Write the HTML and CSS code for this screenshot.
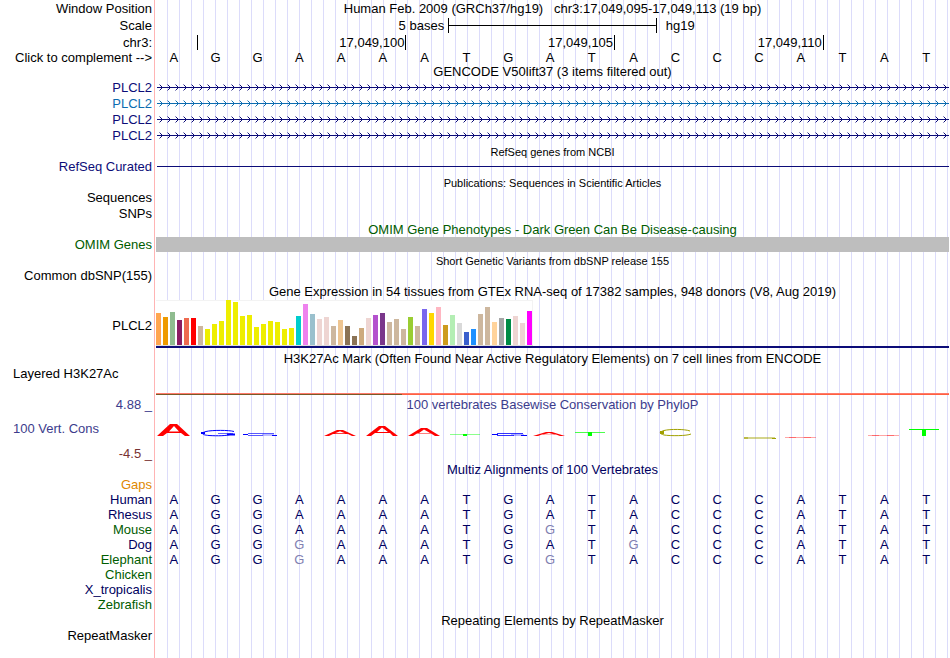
FILE: index.html
```html
<!DOCTYPE html>
<html lang="en">
<head>
<meta charset="utf-8">
<title>Genome Browser chr3:17,049,095-17,049,113</title>
<link rel="stylesheet" href="styles.css">
</head>
<body>
<svg class="defs" width="0" height="0" aria-hidden="true">
  <defs>
    <pattern id="chev-navy" x="2" width="8" height="8" patternUnits="userSpaceOnUse">
      <path d="M0 1h1v1h-1zM0 7h1v1h-1z" fill="#0c0c78" opacity=".45"/>
      <path d="M1 2h1v1h-1zM2 3h1v1h-1zM2 5h1v1h-1zM1 6h1v1h-1z" fill="#0c0c78"/>
      <path d="M0 4h8v1h-8z" fill="#0c0c78"/>
    </pattern>
    <pattern id="chev-blue" x="2" width="8" height="8" patternUnits="userSpaceOnUse">
      <path d="M0 1h1v1h-1zM0 7h1v1h-1z" fill="#0c6cb0" opacity=".45"/>
      <path d="M1 2h1v1h-1zM2 3h1v1h-1zM2 5h1v1h-1zM1 6h1v1h-1z" fill="#0c6cb0"/>
      <path d="M0 4h8v1h-8z" fill="#0c6cb0"/>
    </pattern>
  </defs>
</svg>
<main class="browser">
  <div class="row h17"><span class="label">Window Position</span><h1 class="title">Human Feb. 2009 (GRCh37/hg19) &nbsp; chr3:17,049,095-17,049,113 (19 bp)</h1></div>
  <div class="row h17"><span class="label">Scale</span>
    <div class="ruler"><span class="scale-from">5 bases</span><span class="scale-bar"></span><span class="scale-to">hg19</span></div>
  </div>
  <div class="row h16"><span class="label">chr3:</span>
    <div class="ruler"><span class="tick first"></span><span class="tick">17,049,100</span><span class="tick">17,049,105</span><span class="tick">17,049,110</span></div>
  </div>
  <div class="row h14"><span class="label">Click to complement --&gt;</span>
    <div class="bases"><span>A</span><span>G</span><span>G</span><span>A</span><span>A</span><span>A</span><span>A</span><span>T</span><span>G</span><span>A</span><span>T</span><span>A</span><span>C</span><span>C</span><span>C</span><span>A</span><span>T</span><span>A</span><span>T</span></div>
  </div>

  <div class="row h15"><span></span><h2 class="title">GENCODE V50lift37 (3 items filtered out)</h2></div>
  <div class="row h16 navy"><span class="label">PLCL2</span><div class="track"><svg class="gene" height="8"><rect width="100%" height="8" fill="url(#chev-navy)"/></svg></div></div>
  <div class="row h16 blue"><span class="label">PLCL2</span><div class="track"><svg class="gene" height="8"><rect width="100%" height="8" fill="url(#chev-blue)"/></svg></div></div>
  <div class="row h16 navy"><span class="label">PLCL2</span><div class="track"><svg class="gene" height="8"><rect width="100%" height="8" fill="url(#chev-navy)"/></svg></div></div>
  <div class="row h16 navy"><span class="label">PLCL2</span><div class="track"><svg class="gene" height="8"><rect width="100%" height="8" fill="url(#chev-navy)"/></svg></div></div>

  <div class="row h16"><span></span><h2 class="title small">RefSeq genes from NCBI</h2></div>
  <div class="row h15 navy"><span class="label">RefSeq Curated</span><div class="track"><div class="refseq"></div></div></div>

  <div class="row h16"><span></span><h2 class="title small">Publications: Sequences in Scientific Articles</h2></div>
  <div class="row h15"><span class="label">Sequences</span></div>
  <div class="row h16"><span class="label">SNPs</span></div>

  <div class="row h16 green"><span></span><h2 class="title">OMIM Gene Phenotypes - Dark Green Can Be Disease-causing</h2></div>
  <div class="row h15 green"><span class="label">OMIM Genes</span><div class="track"><div class="omim"></div></div></div>

  <div class="row h16"><span></span><h2 class="title small">Short Genetic Variants from dbSNP release 155</h2></div>
  <div class="row h15"><span class="label">Common dbSNP(155)</span></div>

  <div class="row h17"><span></span><h2 class="title">Gene Expression in 54 tissues from GTEx RNA-seq of 17382 samples, 948 donors (V8, Aug 2019)</h2></div>
  <div class="row h50"><span class="label">PLCL2</span>
    <div class="expression">
      <div class="bars">
        <i style="height:32px;background:#ffa54f"></i><i style="height:28px;background:#ee9a00"></i><i style="height:33px;background:#8fbc8f"></i><i style="height:25px;background:#8b1c62"></i><i style="height:27px;background:#ee6a50"></i><i style="height:27px;background:#ff0000"></i><i style="height:19px;background:#cdb79e"></i>
        <i style="height:16px;background:#eeee00"></i><i style="height:21px;background:#eeee00"></i><i style="height:24px;background:#eeee00"></i><i style="height:45px;background:#eeee00"></i><i style="height:43px;background:#eeee00"></i><i style="height:29px;background:#eeee00"></i><i style="height:30px;background:#eeee00"></i><i style="height:18px;background:#eeee00"></i><i style="height:21px;background:#eeee00"></i><i style="height:24px;background:#eeee00"></i><i style="height:23px;background:#eeee00"></i><i style="height:16px;background:#eeee00"></i><i style="height:17px;background:#eeee00"></i>
        <i style="height:29px;background:#00cdcd"></i><i style="height:41px;background:#ee82ee"></i><i style="height:31px;background:#9ac0cd"></i><i style="height:26px;background:#eed5d2"></i><i style="height:28px;background:#eed5d2"></i><i style="height:19px;background:#cdb79e"></i><i style="height:25px;background:#eec591"></i><i style="height:19px;background:#8b7355"></i><i style="height:9px;background:#8b7355"></i><i style="height:17px;background:#cdaa7d"></i><i style="height:27px;background:#eed5d2"></i><i style="height:30px;background:#b452cd"></i><i style="height:32px;background:#7a378b"></i>
        <i style="height:23px;background:#cdb79e"></i><i style="height:26px;background:#cdb79e"></i><i style="height:16px;background:#cdb79e"></i><i style="height:28px;background:#9acd32"></i><i style="height:19px;background:#cdb79e"></i><i style="height:36px;background:#7a67ee"></i><i style="height:32px;background:#ffd700"></i><i style="height:38px;background:#ffb6c1"></i><i style="height:20px;background:#cd9b1d"></i><i style="height:30px;background:#b4eeb4"></i><i style="height:22px;background:#d9d9d9"></i><i style="height:13px;background:#3a5fcd"></i><i style="height:16px;background:#1e90ff"></i>
        <i style="height:31px;background:#cdb79e"></i><i style="height:38px;background:#cdb79e"></i><i style="height:23px;background:#ffd39b"></i><i style="height:27px;background:#a6a6a6"></i><i style="height:26px;background:#008b45"></i><i style="height:29px;background:#eed5d2"></i><i style="height:22px;background:#eed5d2"></i><i style="height:34px;background:#ff00ff"></i>
      </div>
      <div class="gene-model"></div>
    </div>
  </div>

  <div class="row h16"><span></span><h2 class="title">H3K27Ac Mark (Often Found Near Active Regulatory Elements) on 7 cell lines from ENCODE</h2></div>
  <div class="row h30"><span class="label left upper">Layered H3K27Ac</span><div class="histone"><div class="signal"></div></div></div>

  <div class="row h16 indigo"><span class="label">4.88 _</span><h2 class="title">100 vertebrates Basewise Conservation by PhyloP</h2></div>
  <div class="row h33 indigo"><span class="label left">100 Vert. Cons</span>
    <div class="track">
      <svg class="logo" viewBox="156 412 793 33" preserveAspectRatio="none" fill="none">
        <g fill="#f00">
          <path fill-rule="evenodd" d="M157 436L170 424h7L190 436h-5l-4-3h-14l-4 3zM169 431.500h10L174 426z"/>
          <path fill-rule="evenodd" d="M324 436L337 430h6L356 436h-4l-4-2h-15l-4 2zM335 433.300h10L340 431.300z"/>
          <path fill-rule="evenodd" d="M366 436L379 426h6L398 436h-5l-3-3h-15l-4 3zM377 432h11L382 427.500z"/>
          <path fill-rule="evenodd" d="M408 436L421 428h6L440 436h-5l-4-2.500h-14l-4 2.500zM419 433h11L424 429.500z"/>
          <path fill-rule="evenodd" d="M533 436L546 432h6L565 436h-5l-4-1.500h-14l-4 1.500zM544 434.200h10L549 433z"/>
        </g>
        <g stroke="#00f">
          <path d="M234 431.500C229 430 212 430 206 431.500C200 433 202 435 209 435.500C217 436 228 436 231 434"/>
          <path d="M218 433.500h15" stroke-opacity=".6"/>
          <path d="M201 433h4M227 434.500h8" stroke-width="2"/>
        </g>
        <g fill="#00f">
          <path d="M248 433h26v1h-26zM248 435h15v1h-15z" opacity=".65"/>
          <path d="M262 434h12v1h-12zM263 435h9v1h-9z" opacity=".25"/>
          <path d="M243 434h5v1h-5zM272 435h5v1h-5z"/>
          <path d="M497 433h26v1h-26zM497 435h17v1h-17z" opacity=".8"/>
          <path d="M511 434h13v1h-13zM513 435h9v1h-9z" opacity=".3"/>
          <path d="M492 434h6v1h-6zM521 435h6v1h-6z"/>
        </g>
        <g fill="#0f0">
          <path d="M450 434h30v1h-30z" opacity=".45"/><path d="M463 434h4v2h-4z"/>
          <path d="M575 432h30v1h-30z" opacity=".7"/><path d="M588 432h4v4h-4z"/>
          <path d="M909 429h30v1h-30zM922 429h4v7h-4z"/>
        </g>
        <path d="M690 431C685 429 670 429 664 430.500C659 432 659 433.500 664 435C670 436 687 436 691 434" stroke="#a0a000"/>
        <path d="M660 432.500h4" stroke="#a0a000" stroke-width="3"/>
        <path d="M744 438h31" stroke="#a0a000" stroke-width="2" stroke-opacity=".45"/>
        <path d="M744 438h4M772 438.500h4" stroke="#a0a000"/>
        <path d="M785 437.500h31M868 435.500h31" stroke="#f00" stroke-opacity=".35"/>
        <path d="M789 437.500h7M804 437.500h7M872 435.500h7M887 435.500h7" stroke="#f00" stroke-opacity=".35"/>
      </svg>
    </div>
  </div>
  <div class="row h17 maroon"><span class="label">-4.5 _</span></div>

  <div class="row h15 deep"><span></span><h2 class="title">Multiz Alignments of 100 Vertebrates</h2></div>
  <div class="row h15 orange"><span class="label">Gaps</span></div>
  <div class="row h15 deep"><span class="label">Human</span>
    <div class="bases"><span>A</span><span>G</span><span>G</span><span>A</span><span>A</span><span>A</span><span>A</span><span>T</span><span>G</span><span>A</span><span>T</span><span>A</span><span>C</span><span>C</span><span>C</span><span>A</span><span>T</span><span>A</span><span>T</span></div>
  </div>
  <div class="row h15 deep"><span class="label">Rhesus</span>
    <div class="bases"><span>A</span><span>G</span><span>G</span><span>A</span><span>A</span><span>A</span><span>A</span><span>T</span><span>G</span><span>A</span><span>T</span><span>A</span><span>C</span><span>C</span><span>C</span><span>A</span><span>T</span><span>A</span><span>T</span></div>
  </div>
  <div class="row h15 deep"><span class="label green">Mouse</span>
    <div class="bases"><span>A</span><span>G</span><span>G</span><span>A</span><span>A</span><span>A</span><span>A</span><span>T</span><span>G</span><span class="diff">G</span><span>T</span><span>A</span><span>C</span><span>C</span><span>C</span><span>A</span><span>T</span><span>A</span><span>T</span></div>
  </div>
  <div class="row h15 deep"><span class="label">Dog</span>
    <div class="bases"><span>A</span><span>G</span><span>G</span><span class="diff">G</span><span>A</span><span>A</span><span>A</span><span>T</span><span>G</span><span>A</span><span>T</span><span class="diff">G</span><span>C</span><span>C</span><span>C</span><span>A</span><span>T</span><span>A</span><span>T</span></div>
  </div>
  <div class="row h15 deep"><span class="label green">Elephant</span>
    <div class="bases"><span>A</span><span>G</span><span>G</span><span class="diff">G</span><span>A</span><span>A</span><span>A</span><span>T</span><span>G</span><span class="diff">G</span><span>T</span><span>A</span><span>C</span><span>C</span><span>C</span><span>A</span><span>T</span><span>A</span><span>T</span></div>
  </div>
  <div class="row h15 green"><span class="label">Chicken</span></div>
  <div class="row h15 deep"><span class="label">X_tropicalis</span></div>
  <div class="row h15 green"><span class="label">Zebrafish</span></div>

  <div class="row h16"><span></span><h2 class="title">Repeating Elements by RepeatMasker</h2></div>
  <div class="row h14"><span class="label">RepeatMasker</span></div>
</main>
</body>
</html>
```
FILE: styles.css
```css
* { box-sizing: border-box; }

body {
  margin: 0;
  background: #fff;
  color: #000;
  font-family: "Liberation Sans", Arial, Helvetica, sans-serif;
  font-size: 13px;
  line-height: 15px;
}

.defs { display: block; }

/* Guide lines every 12px, with the pink line that closes the label column */
.browser {
  min-height: 100vh;
  background:
    linear-gradient(#ffb4b4, #ffb4b4) 154px 0 / 1px 100% no-repeat,
    repeating-linear-gradient(to right, transparent 0 11px, #dcdcfa 11px 12px) 156px 0 no-repeat;
  padding-right: 1px;
}

.row {
  display: grid;
  grid-template-columns: 153px minmax(0, 1fr);
  align-items: center;
}

.h14 { height: 14px; }
.h15 { height: 15px; }
.h16 { height: 16px; }
.h17 { height: 17px; }
.h30 { height: 30px; }
.h33 { height: 33px; }
.h50 { height: 50px; }

.navy { color: #0c0c78; }
.blue { color: #0c6cb0; }
.green { color: #005c00; }
.indigo { color: #3c3c8c; }
.maroon { color: #783232; }
.orange { color: #e08800; }
.deep { color: #000060; }

.label {
  text-align: right;
  padding-right: 1px;
  white-space: nowrap;
}
.left { text-align: left; padding-left: 13px; }
.upper { align-self: start; }

.title {
  margin: 0;
  padding-left: 3px;
  font-size: 13px;
  font-weight: normal;
  text-align: center;
  white-space: nowrap;
}
.small { font-size: 11px; padding-top: 2px; }

.track { padding-left: 3px; }

.ruler, .bases {
  display: grid;
  grid-template-columns: repeat(19, minmax(0, 1fr));
}
.ruler { margin-left: 3px; }
.bases { padding-right: 2px; text-align: center; }
.diff { color: #8080b0; }

.scale-from { grid-column: span 7; text-align: right; padding-right: 4px; }
.scale-bar {
  grid-column: span 5;
  border: solid #000;
  border-width: 0 1px;
  background: linear-gradient(#000, #000) center / 100% 1px no-repeat;
}
.scale-to { grid-column: span 2; padding-left: 9px; }

.tick {
  grid-column: span 5;
  border-right: 1px solid #000;
  padding-right: 1px;
  text-align: right;
}
.tick.first { grid-column: span 1; }

.gene { display: block; width: 100%; padding-left: 1px; }
.refseq { height: 1px; margin-left: 1px; background: #0c0c78; }
.omim { height: 15px; background: #bebebe; }

.expression { align-self: start; padding-left: 3px; }
.bars {
  display: flex;
  align-items: flex-end;
  gap: 2px;
  width: max-content;
  height: 46px;
  padding-right: 1px;
  background: #fff;
  border-bottom: 1px solid #ddd;
  box-shadow: inset 0 1px #f3f3f3, inset -1px 0 #f3f3f3;
}
.bars i { width: 5px; }
.gene-model { height: 2px; background: #0c0c78; }

/* The signal is two stacked 1px lines; the lower one changes colour part-way */
.histone { align-self: end; padding: 0 0 1px 3px; }
.signal {
  height: 2px;
  background:
    linear-gradient(#ff7a6a, #ff7a6a) 0 0 / 100% 1px no-repeat,
    linear-gradient(to right, #7a5a28 31%, #ff6040 31%);
}

.logo { display: block; width: 100%; height: 33px; }
```
